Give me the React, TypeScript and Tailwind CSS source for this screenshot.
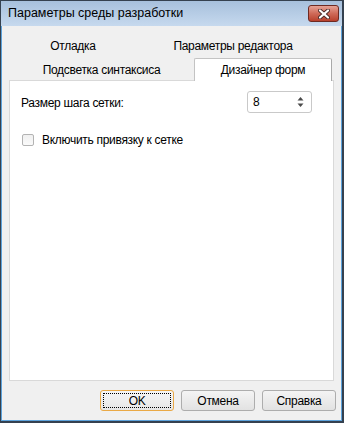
export default function App() {
  return (
    <div className="w-[344px] h-[423px] flex flex-col border-t border-l border-r-2 border-b-2 border-[#35414f] font-['Liberation_Sans',Arial,sans-serif] text-[12px] leading-none text-black">
      {/* title bar */}
      <div className="h-[25px] flex items-center justify-between bg-gradient-to-b from-[#a7c0dc] to-[#c6d9ee] pl-[7px] pr-[3px]">
        <span className="text-[12.5px]">Параметры среды разработки</span>
        <div className="w-[31px] h-[17px] rounded-[3px] border border-[#6e2a22] bg-gradient-to-b from-[#e5a296] via-[#cf6a58] to-[#b8402c] flex items-center justify-center">
          <svg width="12" height="10" viewBox="0 0 12 10">
            <path
              d="M2 1.5 L6 5 L10 1.5 M2 8.5 L6 5 L10 8.5"
              stroke="#4a2a28"
              strokeWidth="4"
              fill="none"
              strokeLinecap="round"
            />
            <path
              d="M2 1.5 L6 5 L10 1.5 M2 8.5 L6 5 L10 8.5"
              stroke="#ffffff"
              strokeWidth="2.2"
              fill="none"
              strokeLinecap="round"
            />
          </svg>
        </div>
      </div>

      {/* body */}
      <div className="flex-1 flex flex-col bg-[#f0f0f0] border-l border-r border-b border-[#5da3dc] pl-[7px] pr-[6px] pt-[8px] tracking-[-0.3px]">
        {/* back row of tabs */}
        <div className="flex h-[24px]">
          <div className="w-[128px] flex items-center justify-center">Отладка</div>
          <div className="w-[192px] flex items-center justify-center">Параметры редактора</div>
        </div>
        {/* front row of tabs */}
        <div className="flex h-[23px] relative z-10 -mb-px">
          <div className="w-[185px] flex items-center justify-center">Подсветка синтаксиса</div>
          <div className="w-[138px] flex items-center justify-center bg-white border border-b-0 border-[#c3c3c3] border-r-[#a9a9a9] rounded-t-[2px]">
            Дизайнер форм
          </div>
        </div>

        {/* tab panel */}
        <div className="w-[325px] h-[301px] bg-white border border-[#d9d9d9] flex flex-col pt-[10px] pl-[11px] pr-[21px]">
          <div className="flex items-center justify-between">
            <span className="pt-[2px]">Размер шага сетки:</span>
            <div className="w-[65px] h-[22px] border border-[#c9c9c9] rounded-[3px] flex items-center justify-between pl-[5px] pr-[7px]">
              <span>8</span>
              <svg width="7" height="12" viewBox="0 0 7 12">
                <path d="M3.5 1 L6.5 4.5 L0.5 4.5 Z" fill="#4a4a4a" />
                <path d="M3.5 11 L6.5 7.5 L0.5 7.5 Z" fill="#4a4a4a" />
              </svg>
            </div>
          </div>
          <div className="flex items-center mt-[21px] pl-[1px]">
            <div className="w-[12px] h-[12px] rounded-[2px] border border-[#b3b3b3] bg-gradient-to-b from-[#f0f0f0] to-[#fafafa]" />
            <span className="ml-[8px]">Включить привязку к сетке</span>
          </div>
        </div>

        {/* buttons */}
        <div className="flex justify-end gap-[7px] mt-[9px] -mr-px">
          <button className="w-[74px] h-[21px] rounded-[3px] border border-[#eaa946] bg-gradient-to-b from-[#f6f6f6] to-[#e6e6e6] p-[2px]">
            <div className="w-full h-full border border-dotted border-black flex items-center justify-center">OK</div>
          </button>
          <button className="w-[74px] h-[21px] rounded-[3px] border border-[#adadad] bg-gradient-to-b from-[#f4f4f4] to-[#e2e2e2] flex items-center justify-center">
            Отмена
          </button>
          <button className="w-[74px] h-[21px] rounded-[3px] border border-[#adadad] bg-gradient-to-b from-[#f4f4f4] to-[#e2e2e2] flex items-center justify-center">
            Справка
          </button>
        </div>
      </div>
    </div>
  );
}
